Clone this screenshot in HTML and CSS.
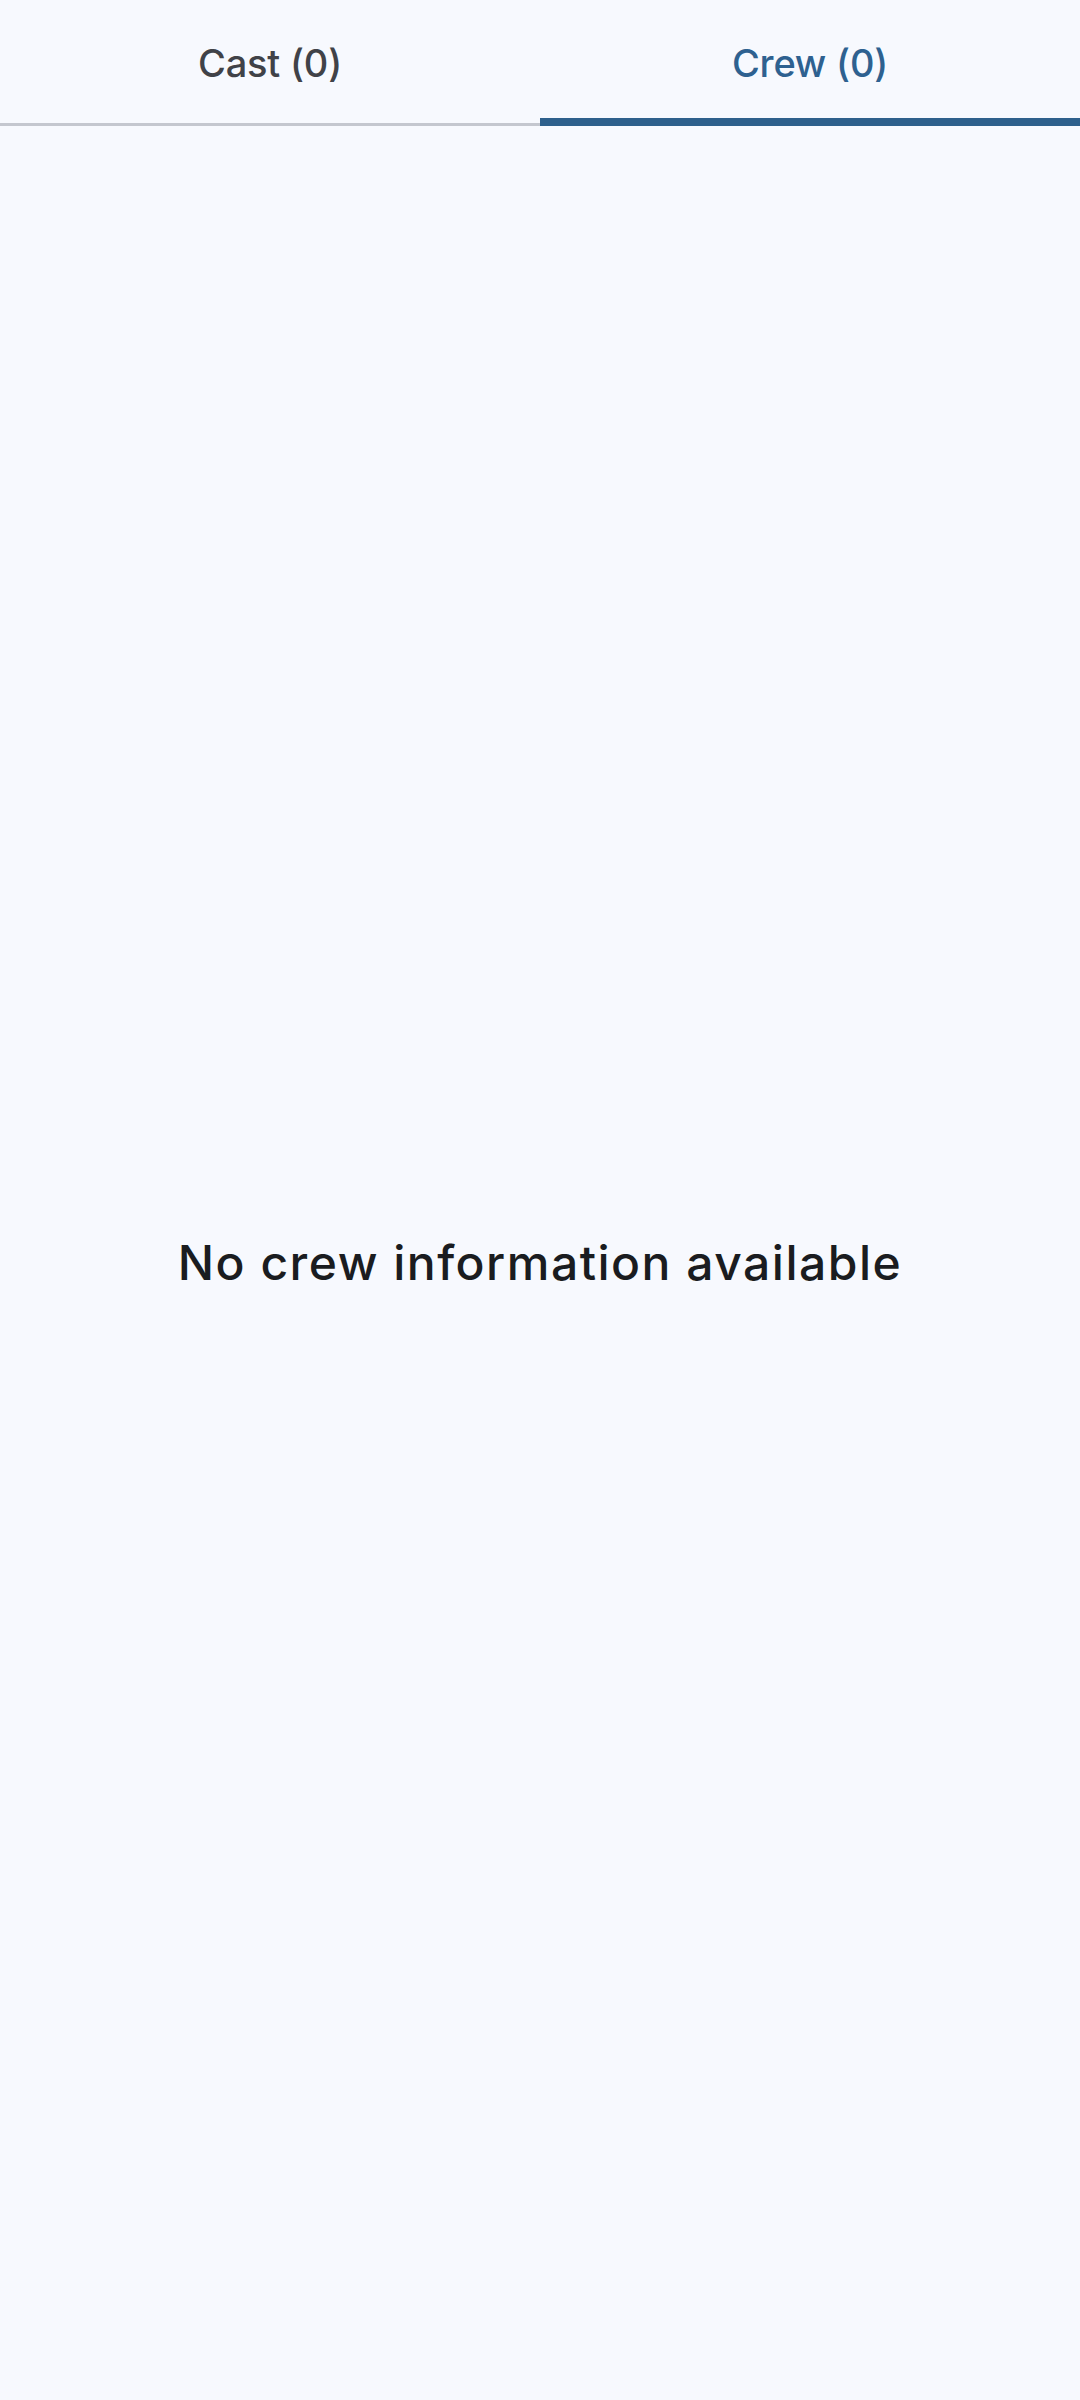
FILE: index.html
```html
<!DOCTYPE html>
<html lang="en">
<head>
<meta charset="utf-8">
<link rel="stylesheet" href="styles.css">
<title>Credits</title>
</head>
<body>
<div class="screen">
  <nav class="tabs">
    <div class="tab">Cast (0)</div>
    <div class="tab tab-active">Crew (0)</div>
  </nav>
  <main class="content">
    <p class="empty">No crew information available</p>
  </main>
</div>
</body>
</html>
```
FILE: styles.css
```css
html, body {
  margin: 0;
  padding: 0;
}
body {
  background: #f7f9fe;
  font-family: Inter, "Open Sans", "Liberation Sans", sans-serif;
}
.screen {
  width: 1080px;
  height: 2400px;
  display: flex;
  flex-direction: column;
}
.tabs {
  display: flex;
  height: 126px;
}
.tab {
  flex: 1;
  box-sizing: border-box;
  display: flex;
  align-items: center;
  justify-content: center;
  padding-top: 3px;
  border-bottom: 3px solid #c4c7cf;
  font-size: 38px;
  font-weight: 500;
  line-height: 1;
  color: #404248;
  letter-spacing: -0.2px;
}
.tab-active {
  padding-top: 8px;
  border-bottom: 8px solid #2e608c;
  color: #2e6190;
}
.content {
  flex: 1;
  display: flex;
  align-items: center;
  justify-content: center;
}
.empty {
  margin: 0;
  font-size: 48px;
  font-weight: 500;
  line-height: 1;
  color: #1a1c20;
  letter-spacing: 1.5px;
}
```
